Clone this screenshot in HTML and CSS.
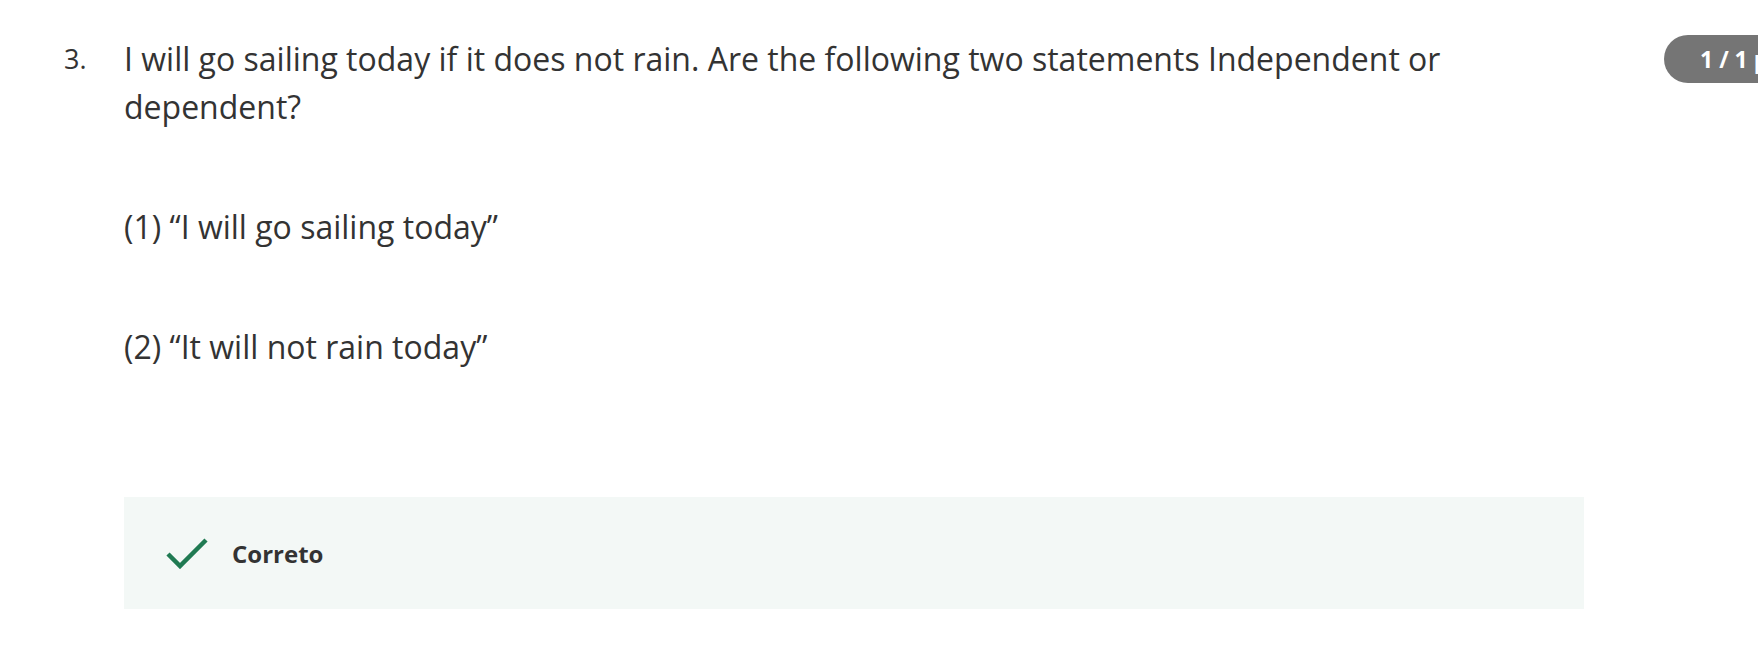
FILE: index.html
```html
<!DOCTYPE html>
<html lang="en">
<head>
<meta charset="utf-8">
<title>Question 3</title>
<link rel="stylesheet" href="styles.css">
</head>
<body>
<div class="page">
  <div class="question">
    <div class="num">3.</div>
    <div class="content">
      <p class="stem">I will go sailing today if it does not rain. Are the following two statements Independent or dependent?</p>
      <p class="stmt">(1) “I will go sailing today”</p>
      <p class="stmt">(2) “It will not rain today”</p>
      <div class="feedback">
        <svg class="check" width="42" height="32" viewBox="0 0 42 32" aria-hidden="true">
          <path d="M2 17 L14 29 L40 3" fill="none" stroke="#1f7a52" stroke-width="4.5"/>
        </svg>
        <span class="fb-text">Correto</span>
      </div>
    </div>
    <div class="badge">1 / 1 ponto</div>
  </div>
</div>
</body>
</html>
```

FILE: styles.css
```css
html, body {
  margin: 0;
  padding: 0;
  background: #ffffff;
  overflow: hidden;
}
body {
  font-family: "Open Sans", "Liberation Sans", sans-serif;
  color: #333333;
}
.page {
  padding: 35px 0 0 64px;
  overflow: hidden;
}
.question {
  display: flex;
  align-items: flex-start;
}
.num {
  width: 60px;
  flex-shrink: 0;
  font-size: 27px;
  line-height: 48px;
}
.content {
  width: 1460px;
  flex-shrink: 0;
}
.stem, .stmt {
  margin: 0 0 72px 0;
  font-size: 32px;
  line-height: 48px;
}
.stmt:last-of-type {
  margin-bottom: 126px;
}
.feedback {
  background: #f3f8f6;
  height: 112px;
  display: flex;
  align-items: center;
  padding-left: 42px;
  gap: 24px;
}
.check {
  display: block;
}
.fb-text {
  font-weight: 700;
  font-size: 24px;
}
.badge {
  flex-shrink: 0;
  margin-left: 80px;
  height: 48px;
  line-height: 48px;
  background: #757575;
  color: #ffffff;
  font-weight: 700;
  font-size: 23px;
  padding: 0 24px 0 36px;
  border-radius: 24px;
  white-space: nowrap;
}
```
